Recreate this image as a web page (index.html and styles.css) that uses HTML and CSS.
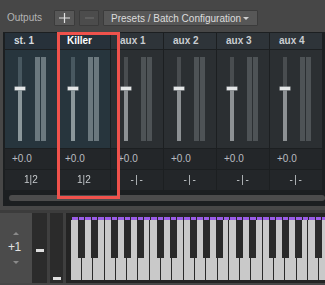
FILE: index.html
```html
<!DOCTYPE html>
<html>
<head>
<meta charset="utf-8">
<link rel="stylesheet" href="styles.css">
</head>
<body>
<div class="toolbar">
  <span class="title">Outputs</span>
  <div class="btn sq"><svg width="11" height="10" viewBox="0 0 11 10"><path d="M0 5H11M5.5 0V10" stroke="#e0e0e0" stroke-width="1.2"/></svg></div>
  <div class="btn sq dis"><svg width="9" height="2" viewBox="0 0 9 2"><path d="M0 1H9" stroke="#6c6c6c" stroke-width="1.2"/></svg></div>
  <div class="btn presets">Presets / Batch Configuration<span class="caret"></span></div>
</div>
<div class="panel">
  <div class="channels">
    <div class="ch blue">
      <div class="hd">st. 1</div>
      <div class="fd"><div class="fader"><div class="up"></div><div class="knob"></div><div class="low"></div></div><div class="meters"><i></i><i></i></div></div>
      <div class="val">+0.0</div>
      <div class="rt"><span>1|2</span></div>
    </div>
    <div class="ch blue killer">
      <div class="hd">Killer</div>
      <div class="fd"><div class="fader"><div class="up"></div><div class="knob"></div><div class="low"></div></div><div class="meters"><i></i><i></i></div></div>
      <div class="val">+0.0</div>
      <div class="rt"><span>1|2</span></div>
    </div>
    <div class="ch">
      <div class="hd">aux 1</div>
      <div class="fd"><div class="fader"><div class="up"></div><div class="knob"></div><div class="low"></div></div><div class="meters"><i></i><i></i></div></div>
      <div class="val">+0.0</div>
      <div class="rt"><span class="none">-|-</span></div>
    </div>
    <div class="ch">
      <div class="hd">aux 2</div>
      <div class="fd"><div class="fader"><div class="up"></div><div class="knob"></div><div class="low"></div></div><div class="meters"><i></i><i></i></div></div>
      <div class="val">+0.0</div>
      <div class="rt"><span class="none">-|-</span></div>
    </div>
    <div class="ch">
      <div class="hd">aux 3</div>
      <div class="fd"><div class="fader"><div class="up"></div><div class="knob"></div><div class="low"></div></div><div class="meters"><i></i><i></i></div></div>
      <div class="val">+0.0</div>
      <div class="rt"><span class="none">-|-</span></div>
    </div>
    <div class="ch">
      <div class="hd">aux 4</div>
      <div class="fd"><div class="fader"><div class="up"></div><div class="knob"></div><div class="low"></div></div><div class="meters"><i></i><i></i></div></div>
      <div class="val">+0.0</div>
      <div class="rt"><span class="none">-|-</span></div>
    </div>
  </div>
  <div class="scroll"></div>
</div>
<div class="band"></div>
<div class="lower">
  <div class="oct">
    <div class="tri-up"></div>
    <div class="octval">+1</div>
    <div class="tri-down"></div>
  </div>
  <div class="col c1"><div class="dash d1"></div></div>
  <div class="sep"></div>
  <div class="col c2"><div class="dash d2"></div></div>
  <div class="sep"></div>
  <div class="kbframe">
    <div class="purple"></div>
    <div class="keys">
      <div class="wk c"></div><div class="wk d"></div><div class="wk"></div><div class="wk f"></div><div class="wk g"></div><div class="wk a"></div><div class="wk"></div>
      <div class="wk c"></div><div class="wk d"></div><div class="wk"></div><div class="wk f"></div><div class="wk g"></div><div class="wk a"></div><div class="wk"></div>
      <div class="wk c"></div><div class="wk d"></div><div class="wk"></div><div class="wk f"></div><div class="wk g"></div><div class="wk a"></div><div class="wk"></div>
      <div class="wk c"></div><div class="wk d"></div><div class="wk"></div>
    </div>
  </div>
</div>
</body>
</html>
```

FILE: styles.css
```css
* { box-sizing: border-box; margin: 0; padding: 0; }
html, body { width: 325px; height: 285px; overflow: hidden; }
body {
  background: #474747;
  font-family: "Liberation Sans", Arial, sans-serif;
  color: #ddd;
}

/* toolbar */
.toolbar {
  height: 32px;
  display: flex;
  align-items: flex-start;
  padding: 10px 0 0 7px;
}
.title {
  font-size: 10px;
  line-height: 15px;
  color: #b4b4b4;
  margin-right: 12px;
}
.btn {
  height: 16px;
  background: #575757;
  border: 1px solid #3b3b3b;
  border-radius: 1px;
  display: flex;
  align-items: center;
  justify-content: center;
}
.sq { width: 21px; }
.dis { width: 20px; margin-left: 4px; background: #4c4c4c; }
.presets {
  width: 155px;
  margin-left: 4px;
  justify-content: flex-start;
  padding-left: 7px;
  font-size: 10px;
  color: #dcdcdc;
}
.caret {
  margin-left: auto;
  margin-right: 8px;
  width: 0;
  height: 0;
  border-left: 3px solid transparent;
  border-right: 3px solid transparent;
  border-top: 3px solid #cfcfcf;
}

/* mixer panel */
.panel {
  margin-left: 3px;
  height: 174px;
  background: #1c1f21;
  padding: 1px 0 0 2px;
}
.channels {
  display: flex;
  gap: 1px;
}
.ch {
  width: 52px;
  display: flex;
  flex-direction: column;
  gap: 1px;
  position: relative;
}
.hd {
  height: 16px;
  line-height: 16px;
  padding-left: 9px;
  font-size: 10px;
  font-weight: bold;
  color: #c9cdd1;
  background: #2e3439;
}
.blue .hd { background: #27313a; color: #d6dbdf; }
.killer .hd { color: #ffffff; }
.fd {
  height: 98px;
  display: flex;
  padding: 7px 0 7px 10px;
  background: #2b2f32;
}
.blue .fd { background: #27353d; }
.fader {
  width: 10px;
  display: flex;
  flex-direction: column;
  align-items: center;
}
.up { width: 4px; height: 30px; background: #494d50; }
.knob { width: 10px; height: 3px; background: #e4e6e7; box-shadow: 0 0 0 0.5px #b9bdbf; }
.low { width: 4px; flex: 1; background: #8d9194; }
.blue .up { background: #485860; }
.blue .low { background: #8b979b; }
.meters { display: flex; gap: 1px; margin-left: 10px; }
.meters i { display: block; width: 5px; background: #4e5356; }
.blue .meters i { background: #6b787e; }
.val {
  height: 20px;
  line-height: 20px;
  padding-left: 7px;
  font-size: 10px;
  color: #b9bdc0;
  background: #232629;
}
.rt {
  height: 20px;
  display: flex;
  justify-content: center;
  align-items: center;
  font-size: 10px;
  color: #c6cacd;
  background: #232629;
}
.rt span {
  display: block;
  line-height: 12px;
  will-change: transform;
}
.rt .none {
  letter-spacing: 1.5px;
  padding-left: 1.5px;
}
.killer::after {
  content: "";
  position: absolute;
  left: -1px;
  top: -1px;
  width: 57px;
  height: 161px;
  border: 3px solid #f0524c;
  z-index: 2;
}
.scroll {
  margin: 5px 0 0 4px;
  height: 6px;
  border-radius: 3px;
  background: #4c4c4c;
}

/* separator band */
.band {
  height: 7px;
  border-bottom: 3px solid #3c3c3c;
}

/* lower keyboard section */
.lower {
  height: 70px;
  display: flex;
}
.oct {
  width: 32px;
  background: #4b4b4b;
  display: flex;
  flex-direction: column;
}
.tri-up {
  margin: 19px 0 0 13px;
  width: 0;
  height: 0;
  border-left: 3.5px solid transparent;
  border-right: 3.5px solid transparent;
  border-bottom: 3.5px solid #8a8a8a;
}
.octval {
  margin: 6px 0 0 8px;
  font-size: 12px;
  line-height: 12px;
  color: #e2e2e2;
  letter-spacing: -0.5px;
}
.tri-down {
  margin: 8px 0 0 13px;
  width: 0;
  height: 0;
  border-left: 3.5px solid transparent;
  border-right: 3.5px solid transparent;
  border-top: 3.5px solid #8a8a8a;
}
.col { background: #2b2b2b; }
.c1 { width: 15px; padding: 36px 0 0 4px; }
.c2 { width: 13px; padding: 64px 0 0 3px; }
.dash { width: 8px; height: 3px; background: #dedede; }
.sep { width: 3px; background: #3f3f3f; }
.kbframe {
  flex: 1;
  background: #242424;
  padding: 4px 0 3px 6px;
  overflow: hidden;
}
.purple {
  height: 3px;
  background: repeating-linear-gradient(to right, #9a5ce6 0 5.6px, #242424 5.6px 6.59px);
}
.keys {
  height: 60px;
  margin-left: -1.3px;
  display: flex;
}
.wk {
  flex: 0 0 11.3px;
  height: 60px;
  background: #c9c9c9;
  border-right: 1px solid #2a2a2a;
  position: relative;
}
.wk.c::after, .wk.d::after, .wk.f::after, .wk.g::after, .wk.a::after {
  content: "";
  position: absolute;
  top: 0;
  width: 6.7px;
  height: 38px;
  background: #2a2a2a;
  z-index: 1;
}
.wk.c::after { left: 7.3px; }
.wk.d::after { left: 9px; }
.wk.f::after { left: 6.3px; }
.wk.g::after { left: 8.1px; }
.wk.a::after { left: 9.8px; }
```
